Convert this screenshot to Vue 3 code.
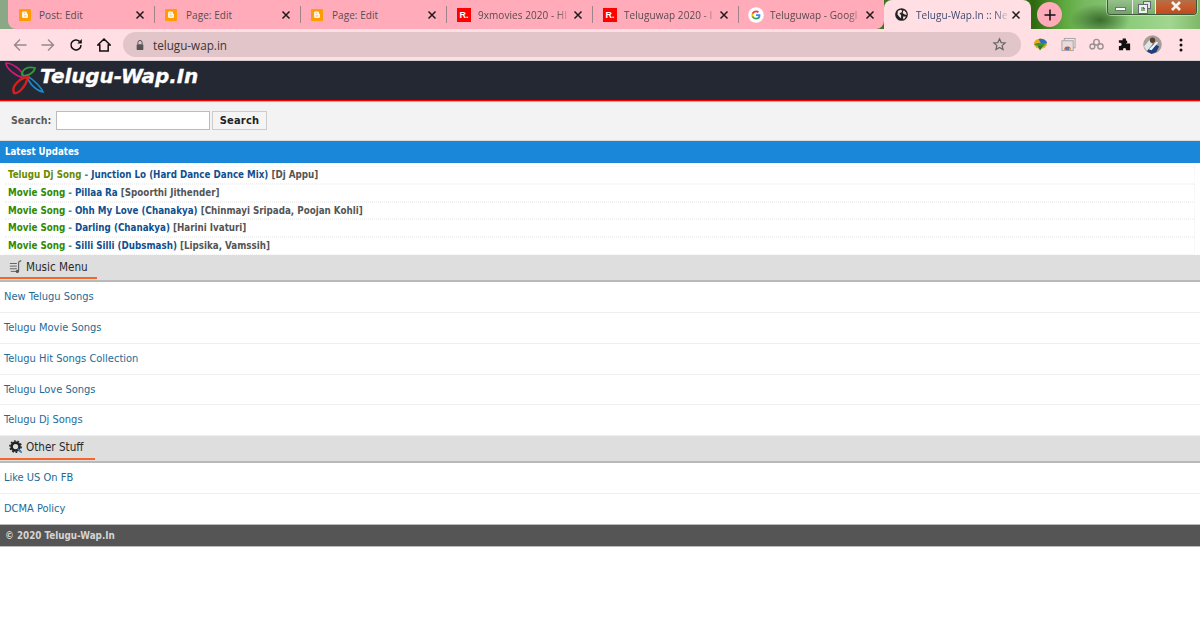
<script setup>
const tabs = [
  { title: 'Post: Edit', icon: 'blogger' },
  { title: 'Page: Edit', icon: 'blogger' },
  { title: 'Page: Edit', icon: 'blogger' },
  { title: '9xmovies 2020 - HI', icon: 'r' },
  { title: 'Teluguwap 2020 - I', icon: 'r' },
  { title: 'Teluguwap - Googl', icon: 'g' }
]
const updates = [
  { cat: 'Telugu Dj Song', olive: true, name: 'Junction Lo (Hard Dance Dance Mix)', who: '[Dj Appu]' },
  { cat: 'Movie Song', name: 'Pillaa Ra', who: '[Spoorthi Jithender]' },
  { cat: 'Movie Song', name: 'Ohh My Love (Chanakya)', who: '[Chinmayi Sripada, Poojan Kohli]' },
  { cat: 'Movie Song', name: 'Darling (Chanakya)', who: '[Harini Ivaturi]' },
  { cat: 'Movie Song', name: 'Silli Silli (Dubsmash)', who: '[Lipsika, Vamssih]' }
]
const music = ['New Telugu Songs', 'Telugu Movie Songs', 'Telugu Hit Songs Collection', 'Telugu Love Songs', 'Telugu Dj Songs']
const other = ['Like US On FB', 'DCMA Policy']
</script>

<template>
  <div class="page">
    <div class="tabstrip">
      <div class="tabs-pink">
        <div v-for="(t, i) in tabs" :key="i" class="tab" :class="'tab-' + t.icon">
          <svg v-if="t.icon === 'blogger'" class="fav-b" viewBox="0 0 12 12">
            <rect width="12" height="12" rx="1" fill="#ff9d00" />
            <path d="M4.500 2.500h2.200c.9 0 1.300.6 1.300 1.500v.8c.7 0 1 .4 1 1v1.700c0 1-.6 1.500-1.500 1.500H4.500c-1 0-1.500-.6-1.500-1.500V4c0-.9.600-1.500 1.500-1.500z" fill="#fff4e6" />
            <path d="M4.700 4.300h1.500M4.700 6.900h2.600" stroke="#f0b060" stroke-width=".8" />
          </svg>
          <span v-else-if="t.icon === 'r'" class="fav-r">R.</span>
          <svg v-else class="fav-g" viewBox="0 0 16 16">
            <circle cx="8" cy="8" r="7.800" fill="#fff" />
            <path d="M12.400 8.200c0-.4 0-.7-.1-1H8v1.900h2.500c-.1.600-.4 1.100-.9 1.400v1.200h1.500c.9-.8 1.300-2 1.300-3.500z" fill="#4285f4" />
            <path d="M8 12.600c1.200 0 2.300-.4 3.100-1.100L9.600 10.300c-.4.300-1 .5-1.600.5-1.200 0-2.200-.8-2.600-1.900H3.900v1.200c.8 1.500 2.400 2.500 4.100 2.500z" fill="#34a853" />
            <path d="M5.400 8.900c-.2-.6-.2-1.200 0-1.800V5.900H3.900c-.6 1.300-.6 2.900 0 4.200z" fill="#fbbc05" />
            <path d="M8 5.200c.7 0 1.300.2 1.800.7l1.300-1.300C10.300 3.800 9.200 3.400 8 3.400c-1.700 0-3.300 1-4.100 2.500l1.500 1.200C5.800 6 6.800 5.200 8 5.200z" fill="#ea4335" />
          </svg>
          <span class="tab-title">{{ t.title }}</span>
          <svg class="x" viewBox="0 0 10 10"><path d="M1.500 1.500l7 7M8.500 1.500l-7 7" stroke="#1c1c1c" stroke-width="1.500" /></svg>
        </div>
      </div>
      <div class="tab active">
        <svg class="fav-w" viewBox="0 0 16 16">
          <circle cx="8" cy="8" r="7.800" fill="#202124" />
          <path d="M3.500 3.600L6.500 2 9 3 8 5.500 5.500 6.500 7.500 9v3.500L5.500 11 3 8zM11 2.700l2.700 2.800.7 3-2.400-.5L9.500 6.500 10 4zM10 10.500h3.500L11 14l-1-1.200z" fill="#ffdfe4" />
        </svg>
        <span class="tab-title">Telugu-Wap.In :: Ne</span>
        <svg class="x" viewBox="0 0 10 10"><path d="M1.500 1.500l7 7M8.500 1.500l-7 7" stroke="#1c1c1c" stroke-width="1.500" /></svg>
      </div>
      <div class="newtab">
        <svg viewBox="0 0 12 12"><path d="M6 .5v11M.5 6h11" stroke="#111" stroke-width="1.500" /></svg>
      </div>
      <div class="winbtns">
        <span class="wb w-min"><i class="min"></i></span>
        <span class="wb w-max"><i class="max2"></i><i class="max"></i></span>
        <span class="wb close">
          <svg viewBox="0 0 12 10"><path d="M2 1l8 8M10 1l-8 8" stroke="#f4f0ec" stroke-width="2.600" /></svg>
        </span>
      </div>
    </div>

    <div class="toolbar">
      <svg class="tb back" viewBox="0 0 14 14"><path d="M13.500 7H1.500M7 1.500L1.500 7 7 12.500" fill="none" stroke="#96898d" stroke-width="1.400" /></svg>
      <svg class="tb fwd" viewBox="0 0 14 14"><path d="M.5 7h12M7 1.500L12.500 7 7 12.500" fill="none" stroke="#96898d" stroke-width="1.400" /></svg>
      <svg class="tb reload" viewBox="0 0 14 14"><path d="M12 7a5 5 0 1 1-1.500-3.600" fill="none" stroke="#111" stroke-width="1.500" /><path d="M12.800 1v4.500H8.300z" fill="#111" /></svg>
      <svg class="tb home" viewBox="0 0 14 14"><path d="M7 1L.8 7h2v6h8.400V7h2z" fill="none" stroke="#111" stroke-width="1.500" /></svg>
      <div class="omnibox">
        <svg class="lock" viewBox="0 0 12 14"><path d="M3.500 6V4a2.500 2.500 0 0 1 5 0v2" fill="none" stroke="#555" stroke-width="1.200" /><rect x="2" y="6" width="8" height="7" rx="1" fill="#555" /></svg>
        <span class="url">telugu-wap.in</span>
        <svg class="star" viewBox="0 0 16 16"><path d="M8 2l1.800 4 4.200.4-3.200 2.800 1 4.200L8 11.200l-3.800 2.200 1-4.200L2 6.400 6.200 6z" fill="none" stroke="#666" stroke-width="1.300" /></svg>
      </div>
      <div class="exts">
        <svg class="ext" viewBox="0 0 16 16"><ellipse cx="8" cy="7" rx="7" ry="5.500" fill="#e6a820" /><path d="M6 2a7 5.500 0 0 1 9 4.500L9 8z" fill="#2a6fc0" /><path d="M1 8c3-2 7-2 13-1-2 3-5 4-7 3.500z" fill="#3f9a2c" /><path d="M5 9.500l6-.5-3.500 5.500z" fill="#2c7a2c" /></svg>
        <svg class="ext" viewBox="0 0 16 16"><rect x="3.500" y="1.500" width="11.500" height="10" fill="#efe6e8" stroke="#a8a0a2" /><rect x="1" y="4" width="12" height="10.500" fill="#e6dcde" stroke="#a8a0a2" /><path d="M3.500 13.500a3.500 3.500 0 0 1 7 0z" fill="#d9473c" /><path d="M7 13.500l3.500 0a3.500 3.500 0 0 0-1-2.400z" fill="#e8b020" /><circle cx="7" cy="13" r="1.500" fill="#3a88cc" /></svg>
        <svg class="ext" viewBox="0 0 16 16"><g fill="none" stroke="#9a9194" stroke-width="1.500"><circle cx="3.600" cy="10" r="2.600" /><circle cx="12.200" cy="10" r="2.800" /><circle cx="8" cy="5.500" r="3" /></g></svg>
        <svg class="ext last" viewBox="0 0 16 16"><path d="M6 1.500h3.500v2.200a1.500 1.500 0 0 1 0 3V7H14v7H9.500v-1.500a1.700 1.700 0 0 0-3 0V14H2V9.500h1.300a1.700 1.700 0 0 0 0-3.400H2V3.500h4z" fill="#111" /></svg>
        <svg class="avatar" viewBox="0 0 20 20"><circle cx="10" cy="10" r="9.800" fill="#a79d98" /><path d="M1 12l6-7 3 5-5 8z" fill="#dfe6e4" /><path d="M4 17l7-8 6 3-3 6-5 2z" fill="#1d3f80" /><path d="M6 15l8-8 2 1-7 8z" fill="#f0f2f4" /><circle cx="10" cy="5.500" r="2.800" fill="#5a4030" /></svg>
        <svg class="menu" viewBox="0 0 4 16"><circle cx="2" cy="3" r="1.500" fill="#111" /><circle cx="2" cy="8" r="1.500" fill="#111" /><circle cx="2" cy="13" r="1.500" fill="#111" /></svg>
      </div>
    </div>

    <header class="site-head">
      <svg class="logo" viewBox="0 0 45 36">
        <path d="M6 2C6 7 15 15 24 17 23 9 12 2 6 2z" fill="none" stroke="#d4187e" stroke-width="1.700" />
        <path d="M22 14C22 8 28 5 35 7 34 12 27 16 22 14z" fill="none" stroke="#2f9a3a" stroke-width="1.800" />
        <path d="M27 15C33 18 41 26 43 31 37 30 29 23 27 15z" fill="none" stroke="#1c88c8" stroke-width="1.700" />
        <path d="M28 16C20 17 11 25 14 32 19 33 26 25 28 16z" fill="none" stroke="#d81e1e" stroke-width="2.400" />
      </svg>
      <span class="logo-text">Telugu-Wap.In</span>
    </header>

    <form class="search" @submit.prevent>
      <label class="search-label">Search:</label>
      <input class="search-input" type="text" />
      <button class="search-btn">Search</button>
    </form>

    <h2 class="latest">Latest Updates</h2>
    <ul class="updates">
      <li v-for="(u, i) in updates" :key="i" class="update">
        <span :class="u.olive ? 'cat olive' : 'cat'">{{ u.cat }}</span>
        <span class="dash">{{ ' - ' }}</span>
        <span class="song">{{ u.name }}</span>
        <span class="who">{{ ' ' + u.who }}</span>
      </li>
    </ul>

    <div class="section">
      <div class="section-tab music">
        <svg class="sec-icon" viewBox="0 0 16 16"><path d="M1 4h8M1 7h8M1 10h8M2 13h6" stroke="#555" stroke-width="1" /><path d="M11 13V3c0-1 1-2 3-2" fill="none" stroke="#555" stroke-width="1.200" /><circle cx="9.500" cy="13" r="1.800" fill="#555" /></svg>
        <span>Music Menu</span>
      </div>
    </div>
    <a v-for="m in music" :key="m" class="link">{{ m }}</a>

    <div class="section second">
      <div class="section-tab stuff">
        <svg class="sec-icon gear" viewBox="0 0 16 16"><circle cx="7.500" cy="7.500" r="4.500" fill="none" stroke="#222" stroke-width="3" /><circle cx="7.500" cy="7.500" r="6.500" fill="none" stroke="#222" stroke-width="1.600" stroke-dasharray="2 2" /><path d="M10 10l4.500 4.500" stroke="#3a78b8" stroke-width="2" /></svg>
        <span>Other Stuff</span>
      </div>
    </div>
    <a v-for="o in other" :key="o" class="link">{{ o }}</a>

    <footer class="foot">© 2020 Telugu-Wap.In</footer>
  </div>
</template>

<style>
html, body { margin: 0; background: #fff; }
</style>

<style scoped>
.page { width: 1200px; height: 630px; overflow: hidden; background: #fff; font-family: "DejaVu Sans Condensed", "DejaVu Sans", sans-serif; }

.tabstrip {
  height: 29px; display: flex; align-items: stretch; position: relative;
  background:
    radial-gradient(ellipse 30px 16px at 1100px 20px, rgba(35, 80, 25, .75), rgba(35, 80, 25, 0)),
    linear-gradient(90deg, #8aa886 0, #8aa886 8px, #2f6a10 1034px, #5faa40 1065px, #78b860 1085px, #8ccc7c 1130px, #a2d690 1170px, #7fb868 1200px);
  font-family: "Open Sans", sans-serif;
}
.tabs-pink {
  margin-left: 8px; width: 876px; flex: none; display: flex; background: #ffabb9; border-radius: 0 0 8px 8px;
}
.tab {
  width: 146px; box-sizing: border-box; display: flex; align-items: center; padding: 0 10px;
  position: relative; flex: none; font-size: 10px; color: #5a4b50;
}
.tab:first-child { width: 147px; padding-left: 11px; }
.tab::after { content: ""; position: absolute; right: 0; top: 6px; height: 17px; width: 1px; background: #a08289; }
.tab:last-child::after { display: none; }
.tab.active {
  width: 147px; padding-left: 11px; background: #ffdfe4; border-radius: 8px 8px 0 0; color: #3d4a70;
}
.tab.active::after { display: none; }
.fav-b { width: 12px; height: 12px; flex: none; margin-right: 9px; }
.tab:first-child .fav-b { margin-right: 8px; }
.fav-r {
  width: 14px; height: 14px; margin-right: 7px; flex: none; background: #f00; color: #fff; font: bold 9px/14px "Liberation Sans", sans-serif; text-align: center;
}
.fav-g { width: 16px; height: 16px; flex: none; margin: 0 6px 0 -1px; }
.fav-w { width: 13px; height: 13px; flex: none; margin-right: 8px; }
.tab-title {
  flex: 1; white-space: nowrap; min-width: 0; font-size: 10px; letter-spacing: .05px;
}
.tab-r .tab-title, .tab-g .tab-title, .active .tab-title {
  -webkit-mask-image: linear-gradient(90deg, #000 82%, transparent 99%);
  mask-image: linear-gradient(90deg, #000 82%, transparent 99%);
}
.x { width: 10px; height: 10px; flex: none; }
.newtab {
  width: 25px; height: 25px; margin: 2px 0 0 6px; border-radius: 50%; background: #ffabb9; display: flex; align-items: center; justify-content: center;
}
.newtab svg { width: 12px; height: 12px; }
.winbtns {
  position: absolute; left: 1107px; top: -3px; width: 90px; height: 18px; display: flex; border: 1px solid #3d5a38; border-top: 0; border-radius: 0 0 4px 4px; box-sizing: border-box; overflow: hidden; box-shadow: 0 0 0 1px rgba(235, 245, 230, .5);
}
.wb { display: flex; align-items: center; justify-content: center; position: relative; border-right: 1px solid #e8efe4; padding-top: 3px; box-sizing: border-box; }
.w-min { width: 25px; background: linear-gradient(#9fc795, #6fa463); }
.w-max { width: 23px; background: linear-gradient(#a4cc9a, #78ad6a); }
.wb.close { flex: 1; border: 0; background: linear-gradient(#a87a58, #c85a2a 60%, #bb4a20); }
.wb.close svg { width: 12px; height: 10px; margin-top: -2px; }
.min { width: 11px; height: 4px; background: #fff; border: 1px solid #6a7a68; box-sizing: border-box; margin-top: 3px; }
.max { width: 8px; height: 8px; border: 2px solid #eef2ec; outline: 1px solid #667; box-sizing: border-box; position: relative; margin: 4px 3px 0 0; }
.max2 { position: absolute; left: 10px; top: 4px; width: 8px; height: 8px; border: 1px solid #667; box-sizing: border-box; background: #dfe6dc; }

.toolbar {
  height: 31px; display: flex; align-items: center; background: #ffdfe4; border-bottom: 1px solid #d6cdd0;
}
.tb { width: 14px; height: 14px; flex: none; }
.back { margin-left: 13px; }
.fwd { margin-left: 14px; }
.reload { margin-left: 14px; }
.home { margin-left: 14px; }
.omnibox {
  margin-left: 12px; width: 898px; height: 25px; flex: none; background: #e2c5c9; border-radius: 13px; display: flex; align-items: center; box-sizing: border-box; padding: 0 14px 0 12px;
}
.lock { width: 10px; height: 12px; flex: none; }
.url { margin-left: 8px; flex: 1; font: 11.700px "Open Sans", sans-serif; color: #3b3537; }
.star { width: 15px; height: 15px; flex: none; }
.exts { display: flex; align-items: center; margin-left: 12px; }
.ext { width: 15px; height: 15px; flex: none; margin-right: 13px; }
.ext.last { margin-right: 11px; }
.avatar { width: 19px; height: 19px; margin-right: 17px; flex: none; }
.menu { width: 4px; height: 16px; flex: none; }

.site-head {
  height: 39px; background: #232833; border-bottom: 1px solid #f00; box-shadow: 0 1px 0 rgba(255, 0, 0, .35); position: relative; display: flex; align-items: flex-start;
}
.logo { width: 45px; height: 36px; flex: none; }
.logo-text {
  margin-left: -5px; margin-top: 2px; font: italic bold 20px/26px "DejaVu Sans", sans-serif; color: #fff; letter-spacing: -.1px; -webkit-text-stroke: .3px #fff;
}

.search {
  height: 39.600px; background: #f3f3f3; border-bottom: 1px solid #dcdcdc; display: flex; align-items: center; padding-left: 11px; box-sizing: border-box;
}
.search-label { font-size: 10.500px; font-weight: bold; color: #5a5a5a; width: 45px; }
.search-input { width: 154px; height: 19px; box-sizing: border-box; border: 1px solid #bbb; background: #fff; padding: 0; margin: 0; }
.search-btn {
  width: 55px; height: 19px; margin: 0 0 0 2px; padding: 0; border: 1px solid #ccc; background: #f4f4f4; color: #222; font: bold 11px "DejaVu Sans Condensed", sans-serif; letter-spacing: .2px;
}

.latest {
  margin: 0; height: 22.400px; background: #1a87d8; color: #fff; font: bold 9.600px/22px "DejaVu Sans Condensed", sans-serif; padding-left: 5px; box-sizing: border-box;
}
.updates { margin: 0; padding: 3.400px 5px 0; list-style: none; height: 92px; box-sizing: border-box; }
.update {
  height: 17.700px; line-height: 16px; box-sizing: border-box; padding-left: 3px; border: 1px dotted #f2f2f2; border-left: 0; font-size: 9.730px; font-weight: bold; white-space: pre; color: #555;
}
.cat { color: #2f8a00; }
.cat.olive { color: #6a8a00; }
.dash { color: #3a8a8a; }
.song { color: #11508f; }
.who { color: #555; }

.section { height: 27px; background: #dedede; border-bottom: 2px solid #b9b9b9; box-sizing: border-box; display: flex; align-items: flex-start; }
.section.second { height: 26.500px; }
.section-tab {
  display: flex; align-items: center; gap: 3px; height: 24px; border-bottom: 2px solid #f4662a; padding: 2px 0 0 9px; box-sizing: border-box;
  font-size: 11.600px; color: #2a2a2a;
}
.section-tab.music { width: 97px; }
.section-tab.stuff { width: 95px; padding-top: 0; }
.sec-icon { width: 14px; height: 14px; flex: none; }

.link {
  display: block; height: 30.850px; box-sizing: border-box; border-bottom: 1px solid #efefef; padding-left: 4px; font-size: 11px; line-height: 29.500px; color: #1d6a96;
}
.link:last-of-type { border-bottom: 0; }

.foot {
  height: 23px; background: #555; border-top: 1px solid #bbb; border-bottom: 1px solid #bbb; color: #d4d4d4; font-size: 9.800px; font-weight: bold; line-height: 21px; padding-left: 5px; box-sizing: border-box;
}
</style>
